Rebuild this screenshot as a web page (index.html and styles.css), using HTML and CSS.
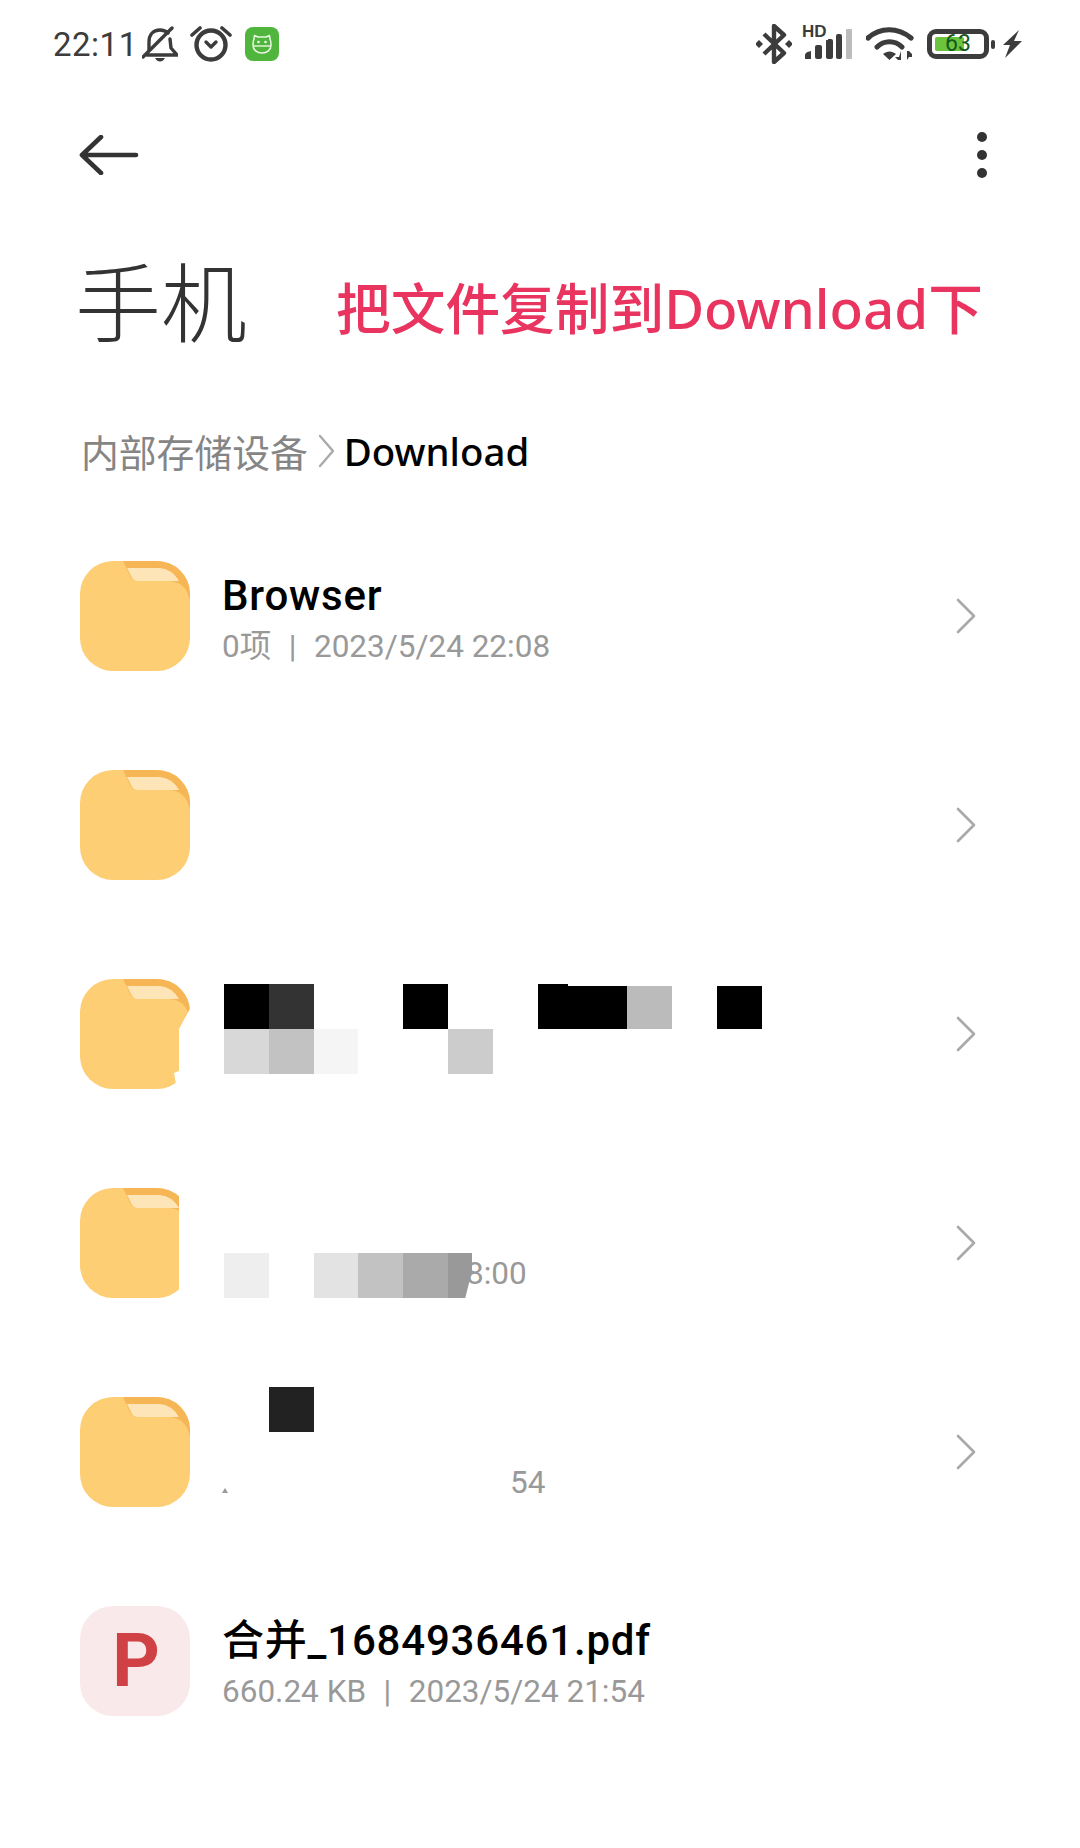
FILE: index.html
```html
<!DOCTYPE html>
<html lang="zh-CN">
<head>
    <meta charset="UTF-8">
    <title>手机 Download</title>
    <link rel="stylesheet" href="styles.css">
</head>
<body>
    <svg class="sprites" width="0" height="0">
        <defs>
            <clipPath id="folder-clip"><rect width="110" height="110" rx="33"/></clipPath>
            <g id="folder-art" clip-path="url(#folder-clip)">
                <rect width="110" height="110" fill="#fdce73"/>
                <path d="M43 0H110V40Q106 20 88 20H58Q53 20 50 15Z" fill="#f7b655"/>
                <path d="M47 7H80Q92 8 99 20H58Q53 20 51 15Z" fill="#fde5b8"/>
            </g>
            <g id="chevron-art">
                <path d="M2 2L18 18L2 34" fill="none" stroke="#a9a9a9" stroke-width="2.6" stroke-linecap="round" stroke-linejoin="round"/>
            </g>
        </defs>
    </svg>

    <div class="phone">
        <header class="status">
            <div class="status-left">
                <span class="time">22:11</span>
                <svg class="ic-bell" width="36" height="36" viewBox="0 0 36 36">
                    <path d="M7 24V16C7 9 11 4 18 4C21 4 24 5 26 7M28 13L29 22L35 29H5" fill="none" stroke="#3c3c3c" stroke-width="3.4" stroke-linejoin="round" stroke-linecap="round"/>
                    <path d="M13 32H23Q21 35.500 18 35.500Q15 35.500 13 32Z" fill="#3c3c3c"/>
                    <path d="M1 31L30 2" fill="none" stroke="#3c3c3c" stroke-width="3.4" stroke-linecap="round"/>
                </svg>
                <svg class="ic-alarm" width="42" height="38" viewBox="0 0 42 38">
                    <circle cx="21" cy="20" r="14.500" fill="none" stroke="#3c3c3c" stroke-width="4.400"/>
                    <path d="M2 10L10 3M40 10L32 3" fill="none" stroke="#3c3c3c" stroke-width="3.600" stroke-linecap="round"/>
                    <path d="M16 17L21 22L26 17" fill="none" stroke="#3c3c3c" stroke-width="3.400" stroke-linecap="round" stroke-linejoin="round"/>
                </svg>
                <svg class="ic-app" width="34" height="34" viewBox="0 0 34 34">
                    <rect width="34" height="34" rx="8" fill="#4fb53c"/>
                    <path d="M9 12L9.500 8.500L13 10H21L24.500 8.500L25 12Q26 14 26 18C26 23 22 26 17 26C12 26 8 23 8 18Q8 14 9 12Z" fill="none" stroke="#e8f6e2" stroke-width="1.600" stroke-linejoin="round"/>
                    <path d="M8.500 19H25.500" fill="none" stroke="#e8f6e2" stroke-width="1.400"/>
                    <circle cx="13.500" cy="15" r="1.300" fill="#e8f6e2"/>
                    <circle cx="20.500" cy="15" r="1.300" fill="#e8f6e2"/>
                </svg>
            </div>
            <div class="status-right">
                <svg class="ic-bt" width="36" height="40" viewBox="0 0 36 40">
                    <path d="M8 10L28 29L18 38V2L28 11L8 30" fill="none" stroke="#3c3c3c" stroke-width="4.400" stroke-linejoin="round"/>
                    <path d="M3 16L7 20L3 24L-1 20Z" fill="#3c3c3c"/>
                    <path d="M33 16L37 20L33 24L29 20Z" fill="#3c3c3c"/>
                </svg>
                <div class="signal">
                    <span class="hd">HD</span>
                    <svg class="bars" width="48" height="30" viewBox="0 0 48 30">
                        <path d="M1 30V26Q1 23 7 22V30Z" fill="#3c3c3c"/>
                        <rect x="11" y="16" width="7" height="14" rx="2" fill="#3c3c3c"/>
                        <rect x="22" y="10" width="7" height="20" rx="2" fill="#3c3c3c"/>
                        <rect x="32" y="5" width="6" height="25" rx="2" fill="#3c3c3c"/>
                        <rect x="42" y="0" width="6" height="30" rx="1" fill="#bcbcbc"/>
                    </svg>
                </div>
                <svg class="ic-wifi" width="48" height="34" viewBox="0 0 48 34">
                    <path d="M2 11C14 0 32 0 45 11" fill="none" stroke="#3c3c3c" stroke-width="5.200" stroke-linecap="round"/>
                    <path d="M11 20C18 13 29 13 36 20" fill="none" stroke="#3c3c3c" stroke-width="5.200" stroke-linecap="round"/>
                    <path d="M17 27C21 23.500 26 23.500 30 27L23.500 33Z" fill="#3c3c3c"/>
                    <path d="M35 24V33H32L29 30H33M41 33V24H43L46 27V30H43Z" fill="#3c3c3c"/>
                </svg>
                <div class="battery">
                    <div class="battery-case">
                        <span class="battery-fill"></span>
                        <span class="battery-num">63</span>
                    </div>
                    <span class="battery-nub"></span>
                </div>
                <svg class="ic-bolt" width="20" height="28" viewBox="0 0 20 28">
                    <path d="M17 0L1 15H8L3 28L20 11H12Z" fill="#3c3c3c"/>
                </svg>
            </div>
        </header>

        <div class="toolbar">
            <svg width="60" height="40" viewBox="0 0 60 40">
                <path d="M57 20H3M22 2L3 20L22 38" fill="none" stroke="#333" stroke-width="4.600" stroke-linecap="round" stroke-linejoin="round"/>
            </svg>
            <div class="more"><i></i><i></i><i></i></div>
        </div>

        <div class="heading">
            <h1>手机</h1>
            <span class="note">把文件复制到Download下</span>
        </div>

        <nav class="crumbs">
            <span class="crumb-root">内部存储设备</span>
            <svg class="crumb-sep" width="18" height="34" viewBox="0 0 18 34">
                <path d="M2 2L15 17L2 32" fill="none" stroke="#aaa" stroke-width="2.400" stroke-linecap="round" stroke-linejoin="round"/>
            </svg>
            <span class="crumb-current">Download</span>
        </nav>

        <ul class="list">
            <li class="row">
                <svg class="thumb" viewBox="0 0 110 110"><use href="#folder-art"/></svg>
                <div class="info">
                    <div class="name">Browser</div>
                    <div class="meta">0项<b class="sep">|</b>2023/5/24 22:08</div>
                </div>
                <svg class="chevron" viewBox="0 0 20 36"><use href="#chevron-art"/></svg>
            </li>
            <li class="row">
                <svg class="thumb" viewBox="0 0 110 110"><use href="#folder-art"/></svg>
                <div class="info"></div>
                <svg class="chevron" viewBox="0 0 20 36"><use href="#chevron-art"/></svg>
            </li>
            <li class="row">
                <svg class="thumb" viewBox="0 0 110 110">
                    <use href="#folder-art"/>
                    <path d="M111 28L99 50V92L94 94L97 111H111Z" fill="#fff"/>
                </svg>
                <div class="info"></div>
                <div class="mosaic mosaic-a">
                    <i class="c-black"></i><i class="c-dark"></i><i></i><i></i><i class="c-black"></i><i></i><i></i><i class="c-black low bump"></i><i class="c-black low"></i><i class="c-silver low"></i><i></i><i class="c-black low"></i>
                    <i class="c-g1"></i><i class="c-g2"></i><i class="c-g3"></i><i></i><i></i><i class="c-g4"></i>
                </div>
                <svg class="chevron" viewBox="0 0 20 36"><use href="#chevron-art"/></svg>
            </li>
            <li class="row">
                <svg class="thumb" viewBox="0 0 110 110">
                    <use href="#folder-art"/>
                    <rect x="99" y="-1" width="12" height="112" fill="#fff"/>
                </svg>
                <div class="info">
                    <div class="name"></div>
                    <div class="meta"><span class="tail-a">8:00</span></div>
                </div>
                <div class="mosaic mosaic-b">
                    <i class="c-g5"></i><i></i><i class="c-g6"></i><i class="c-g2"></i><i class="c-g7"></i><i class="c-g8 cut"></i>
                </div>
                <svg class="chevron" viewBox="0 0 20 36"><use href="#chevron-art"/></svg>
            </li>
            <li class="row">
                <svg class="thumb" viewBox="0 0 110 110"><use href="#folder-art"/></svg>
                <div class="info">
                    <div class="name"></div>
                    <div class="meta"><span class="speck"></span><span class="tail-b">54</span></div>
                </div>
                <div class="mosaic mosaic-c">
                    <i></i><i class="c-ink"></i>
                </div>
                <svg class="chevron" viewBox="0 0 20 36"><use href="#chevron-art"/></svg>
            </li>
            <li class="row">
                <div class="thumb pdf">P</div>
                <div class="info">
                    <div class="name">合并_1684936461.pdf</div>
                    <div class="meta">660.24 KB<b class="sep">|</b>2023/5/24 21:54</div>
                </div>
            </li>
        </ul>
    </div>
</body>
</html>
```

FILE: styles.css
```css
* {
    box-sizing: border-box;
}
html, body {
    margin: 0;
    padding: 0;
    background: #fff;
}
body {
    font-family: Roboto, "Noto Sans CJK SC", sans-serif;
    color: #000;
}
.sprites {
    display: block;
    height: 0;
}
.phone {
    width: 1080px;
    height: 1848px;
    overflow: hidden;
}

/* status bar */
.status {
    height: 88px;
    display: flex;
    align-items: center;
    justify-content: space-between;
    padding: 0 58px 0 53px;
    color: #3c3c3c;
}
.status-left, .status-right {
    display: flex;
    align-items: center;
}
.time {
    font-size: 33px;
    letter-spacing: 0.5px;
    width: 89px;
}
.ic-alarm {
    margin-left: 12px;
}
.ic-app {
    margin-left: 13px;
}
.signal {
    position: relative;
    width: 48px;
    height: 32px;
    margin-left: 12px;
    margin-top: 2px;
}
.bars {
    display: block;
}
.hd {
    position: absolute;
    left: -2px;
    top: -5px;
    font: bold 17px/16px "Liberation Sans", sans-serif;
    color: #3c3c3c;
    background: #fff;
    padding-right: 1px;
}
.ic-wifi {
    margin-left: 14px;
}
.battery {
    display: flex;
    align-items: center;
    margin-left: 13px;
}
.battery-case {
    position: relative;
    width: 62px;
    height: 30px;
    border: 5px solid #3c3c3c;
    border-radius: 9px;
}
.battery-fill {
    position: absolute;
    left: 3px;
    top: 3px;
    bottom: 3px;
    width: 29px;
    background: #6cc43c;
    border-radius: 2px;
}
.battery-num {
    position: absolute;
    left: 13px;
    top: 0;
    font-size: 23px;
    line-height: 20px;
    color: #12591c;
}
.battery-nub {
    width: 4px;
    height: 9px;
    margin-left: 2px;
    border-radius: 2px;
    background: #3c3c3c;
}
.ic-bolt {
    margin-left: 7px;
}

/* toolbar */
.toolbar {
    height: 134px;
    display: flex;
    align-items: center;
    justify-content: space-between;
    padding: 0 93px 0 79px;
}
.more {
    display: flex;
    flex-direction: column;
    gap: 8px;
}
.more i {
    display: block;
    width: 10px;
    height: 10px;
    border-radius: 50%;
    background: #333;
}

/* title */
.heading {
    height: 166px;
    display: flex;
    align-items: center;
    padding: 0 0 12px 75px;
}
.heading h1 {
    margin: 0;
    font-family: "Noto Sans CJK SC", sans-serif;
    font-size: 86px;
    font-weight: 300;
    color: #333;
    line-height: 100px;
}
.note {
    margin-left: 89px;
    margin-top: 12px;
    font-family: "Noto Sans", "Noto Sans CJK SC", sans-serif;
    font-size: 54.700px;
    font-weight: 500;
    color: #e8345f;
    white-space: nowrap;
}

/* breadcrumb */
.crumbs {
    height: 125px;
    display: flex;
    align-items: center;
    padding-left: 81px;
}
.crumb-root {
    font-family: "Noto Sans CJK SC", sans-serif;
    font-size: 37.800px;
    color: #858585;
}
.crumb-sep {
    margin-left: 10px;
}
.crumb-current {
    margin-left: 8px;
    font-family: "Noto Sans", sans-serif;
    font-size: 38.400px;
    font-weight: 500;
}

/* file list */
.list {
    list-style: none;
    margin: -2px 0 0;
    padding: 0;
}
.row {
    position: relative;
    height: 209px;
    display: flex;
    align-items: center;
    padding: 0 104px 0 80px;
}
.thumb {
    flex: none;
    width: 110px;
    height: 110px;
}
.pdf {
    border-radius: 33px;
    background: #f9e9ea;
    color: #d04145;
    font-family: Roboto, sans-serif;
    font-weight: 700;
    font-size: 74px;
    line-height: 110px;
    text-align: center;
    padding-left: 2px;
}
.info {
    flex: 1;
    margin-left: 32px;
    padding-top: 8px;
}
.name {
    height: 50px;
    font-size: 42px;
    letter-spacing: 0.800px;
    line-height: 50px;
    font-weight: 500;
    white-space: nowrap;
}
.meta {
    margin-top: 4px;
    height: 44px;
    line-height: 44px;
    font-size: 31.500px;
    color: #999;
    white-space: nowrap;
}
.sep {
    font-weight: 400;
    margin: 0 17.500px;
}
.chevron {
    flex: none;
    width: 20px;
    height: 36px;
}
.tail-a {
    margin-left: 244px;
}
.tail-b {
    margin-left: 282px;
}
.speck {
    display: inline-block;
    width: 0;
    height: 0;
    border-left: 3px solid transparent;
    border-right: 3px solid transparent;
    border-bottom: 5px solid #999;
}

/* blurred out parts of the screenshot */
.mosaic {
    position: absolute;
    left: 224px;
    display: grid;
    grid-template-columns: repeat(12, 44.8px);
    grid-auto-rows: 45px;
}
.mosaic-a {
    top: 55px;
}
.mosaic-b {
    top: 115px;
}
.mosaic-c {
    top: 40px;
}
.mosaic .low {
    margin-top: 2px;
}
.mosaic .bump {
    position: relative;
}
.mosaic .bump::before {
    content: "";
    position: absolute;
    left: 0;
    top: -2px;
    width: 30px;
    height: 2px;
    background: #000;
}
.mosaic .cut {
    width: 24px;
    clip-path: polygon(0 0, 100% 0, 100% 40%, 72% 100%, 0 100%);
}
.c-black { background: #000; }
.c-dark { background: #333; }
.c-ink { background: #222; }
.c-silver { background: #bbb; }
.c-g1 { background: #d8d8d8; }
.c-g2 { background: #c2c2c2; }
.c-g3 { background: #f5f5f5; }
.c-g4 { background: #ccc; }
.c-g5 { background: #eee; }
.c-g6 { background: #e3e3e3; }
.c-g7 { background: #aaa; }
.c-g8 { background: #999; }
```
